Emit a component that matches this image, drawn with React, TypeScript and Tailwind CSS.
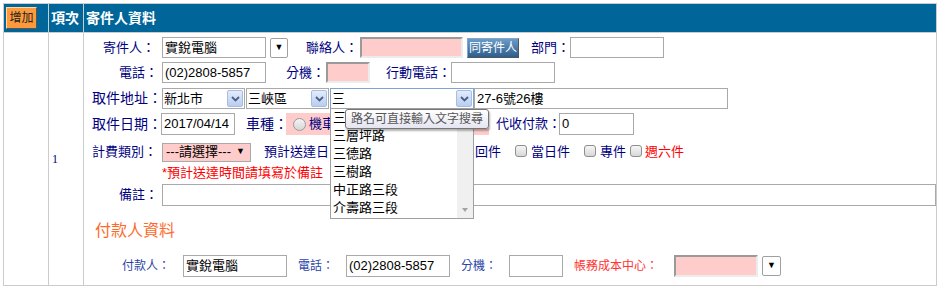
import { FC, ReactNode } from "react";

const navy = "text-[#000080]";

const Chevron: FC = () => (
	<span className="flex h-[17px] w-[16px] items-center justify-center rounded-[2px] border border-[#a7bde6] bg-gradient-to-b from-[#e3ecfa] to-[#b9cdef]">
		<svg width="9" height="6" viewBox="0 0 9 6">
			<path d="M1 1 L4.5 4.5 L8 1" stroke="#4b5f86" strokeWidth="1.8" fill="none" />
		</svg>
	</span>
);

const DownBtn: FC<{ className?: string }> = ({ className = "" }) => (
	<span
		className={`flex h-[20px] w-[18px] items-center justify-center rounded-[2px] border border-[#a0a0a0] bg-white text-[9px] text-black ${className}`}
	>
		▼
	</span>
);

const Box: FC<{ w: string; value?: string; pink?: boolean; h?: string; className?: string }> = ({
	w,
	value = "",
	pink,
	h = "h-[21px]",
	className = "",
}) => (
	<span
		className={`flex items-center whitespace-nowrap px-[2px] text-[13px] text-black ${h} ${w} ${
			pink
				? "border-2 border-t-[#9a9a9a] border-l-[#9a9a9a] border-r-[#ececec] border-b-[#ececec] bg-[#ffcccc]"
				: "border border-[#a9a9a9] bg-white"
		} ${className}`}
	>
		{value}
	</span>
);

const Check: FC = () => (
	<span className="inline-block h-[12px] w-[12px] rounded-[3px] border border-[#8f8f8f] bg-gradient-to-b from-[#f6f6f6] to-[#d8d8d8]" />
);

const Label: FC<{ w: string; children: ReactNode; className?: string }> = ({ w, children, className = "" }) => (
	<span className={`inline-block shrink-0 whitespace-nowrap text-[13px] ${navy} ${w} ${className}`}>{children}</span>
);

const Select: FC<{ w: string; value: string; className?: string; focus?: boolean }> = ({ w, value, className = "", focus }) => (
	<span
		className={`flex h-[21px] items-center justify-between border pl-[1px] pr-[1px] text-[13px] text-black ${
			focus ? "border-[#7ea4d6]" : "border-[#a9a9a9]"
		} bg-white ${w} ${className}`}
	>
		<span>{value}</span>
		<Chevron />
	</span>
);

const roads = ["三", "三層坪路", "三德路", "三樹路", "中正路三段", "介壽路三段"];

const App: FC = () => {
	return (
		<div className="h-[289px] w-[941px] bg-white pl-[3px] pt-[3px] font-['Liberation_Sans','Noto_Sans_CJK_TC',sans-serif]">
			<table className="w-[934px] border-collapse border border-[#cccccc]">
				<thead>
					<tr className="h-[29px] bg-[#006699] text-left text-[14px] font-bold text-white">
						<th className="w-[45px] border border-[#cccccc] pl-[2px]">
							<span className="flex h-[22px] w-[31px] items-center justify-center border border-t-[#ffd9a0] border-l-[#ffd9a0] border-r-[#555] border-b-[#555] bg-[#ff9a3c] text-[12px] font-normal text-[#222]">
								增加
							</span>
						</th>
						<th className="w-[35px] border border-[#cccccc] pl-[2px]">項次</th>
						<th className="border border-[#cccccc] pl-[2px]">寄件人資料</th>
					</tr>
				</thead>
				<tbody>
					<tr className="h-[253px]">
						<td className="border border-[#cccccc]" />
						<td className="border border-[#cccccc] pl-[3px] align-middle font-['Liberation_Serif',serif] text-[12px] text-[#000080]">
							1
						</td>
						<td className="border border-[#cccccc] align-top">
							<div className="flex flex-col pt-[4px]">
								{/* 寄件人 */}
								<div className="flex h-[21px] items-center">
									<Label w="w-[72px]" className="pl-[19px]">寄件人：</Label>
									<Box w="w-[104px]" value="實銳電腦" className="ml-[6px]" />
									<DownBtn className="ml-[4px]" />
									<Label w="w-[54px]" className="ml-[18px]">聯絡人：</Label>
									<Box w="w-[103px]" pink />
									<span className="ml-[4px] flex h-[20px] w-[52px] items-center justify-center whitespace-nowrap border border-[#555] border-t-[#7fa8cc] border-l-[#7fa8cc] bg-gradient-to-b from-[#6b9cc8] to-[#2d5f8e] text-[12px] text-white">
										同寄件人
									</span>
									<Label w="w-[39px]" className="ml-[12px]">部門：</Label>
									<Box w="w-[94px]" />
								</div>
								{/* 電話 */}
								<div className="mt-[4px] flex h-[21px] items-center">
									<Label w="w-[72px]" className="pl-[35px]">電話：</Label>
									<Box w="w-[104px]" value="(02)2808-5857" className="ml-[6px]" />
									<Label w="w-[40px]" className="ml-[20px]">分機：</Label>
									<Box w="w-[44px]" pink />
									<Label w="w-[65px]" className="ml-[16px]">行動電話：</Label>
									<Box w="w-[104px]" />
								</div>
								{/* 取件地址 */}
								<div className="mt-[5px] flex h-[21px] items-center">
									<Label w="w-[72px]" className="pl-[8px] text-[14px] text-[#000066]">取件地址：</Label>
									<Select w="w-[83px]" value="新北市" className="ml-[6px]" />
									<Select w="w-[83px]" value="三峽區" className="ml-[1px]" />
									<div className="relative ml-[1px]">
										<Select w="w-[144px]" value="三" focus />
										<div className="absolute left-0 top-[20px] z-10 flex h-[111px] w-[144px] border border-[#a0a0a0] bg-white">
											<div className="flex flex-1 flex-col">
												{roads.map((r) => (
													<span key={r} className="flex h-[18px] items-center pl-[2px] text-[13px] text-black">
														{r}
													</span>
												))}
											</div>
											<div className="flex w-[16px] flex-col justify-end bg-[#f0f0f0] pb-[5px]">
												<svg width="16" height="6" viewBox="0 0 16 6">
													<path d="M5 1 L11 1 L8 5 Z" fill="#a3a3a3" />
												</svg>
											</div>
										</div>
										<div className="absolute left-[15px] top-[21px] z-20 flex h-[20px] w-[144px] items-center rounded-[3px] border border-[#767676] bg-gradient-to-b from-white to-[#e4e5f0] pl-[5px] text-[12px] text-[#575757] shadow-[1px_2px_2px_rgba(0,0,0,0.3)]">
											路名可直接輸入文字搜尋
										</div>
									</div>
									<Box w="w-[254px]" value="27-6號26樓" />
								</div>
								{/* 取件日期 */}
								<div className="mt-[4px] flex h-[22px] items-center">
									<Label w="w-[72px]" className="pl-[8px] text-[14px] text-[#000066]">取件日期：</Label>
									<Box w="w-[74px]" value="2017/04/14" h="h-[22px]" className="ml-[5px]" />
									<Label w="w-[40px]" className="ml-[11px] text-[14px] text-[#000066]">車種：</Label>
									<span className="flex h-[22px] w-[203px] items-center gap-[3px] bg-[#ffcccc] pl-[7px] text-[13px] text-[#000080]">
										<span className="inline-block h-[13px] w-[13px] rounded-full border border-[#9a9a9a] bg-gradient-to-b from-[#f4f4f4] to-[#d6d6d6]" />
										機車
									</span>
									<Label w="w-[63px]" className="ml-[7px]">代收付款：</Label>
									<Box w="w-[75px]" value="0" h="h-[22px]" />
								</div>
								{/* 計費類別 */}
								<div className="mt-[7px] flex h-[20px] items-center">
									<Label w="w-[72px]" className="pl-[8px] text-[#1a1a66]">計費類別：</Label>
									<span className="ml-[6px] flex h-[19px] w-[89px] items-center justify-between border border-[#a9a9a9] bg-[#ffcccc] pl-[3px] pr-[5px] text-[13px] text-black">
										---請選擇---<span className="text-[9px]">▼</span>
									</span>
									<Label w="w-[211px]" className="ml-[13px]">預計送達日</Label>
									<Label w="w-[26px]">回件</Label>
									<span className="ml-[14px]"><Check /></span>
									<Label w="w-[40px]" className="ml-[4px]">當日件</Label>
									<span className="ml-[13px]"><Check /></span>
									<Label w="w-[26px]" className="ml-[4px]">專件</Label>
									<span className="ml-[4px]"><Check /></span>
									<Label w="w-[40px]" className="ml-[3px] text-[#ff0000]">週六件</Label>
								</div>
								<div className="mt-[3px] flex h-[15px] items-center pl-[78px] text-[13px] text-[#ff0000]">
									*預計送達時間請填寫於備註
								</div>
								{/* 備註 */}
								<div className="mt-[4px] flex h-[22px] items-center">
									<Label w="w-[72px]" className="pl-[35px]">備註：</Label>
									<Box w="w-[774px]" h="h-[22px]" className="ml-[6px]" />
								</div>
								<div className="mt-[16px] flex h-[18px] items-center pl-[11px] text-[16px] text-[#ff6a2a]">
									付款人資料
								</div>
								{/* 付款人 */}
								<div className="mt-[15px] flex h-[22px] items-center text-[12px]">
									<span className="ml-[38px] w-[61px] shrink-0 text-[#2b44a8]">付款人：</span>
									<Box w="w-[104px]" value="實銳電腦" h="h-[22px]" />
									<span className="ml-[11px] w-[48px] shrink-0 text-[#2b44a8]">電話：</span>
									<Box w="w-[104px]" value="(02)2808-5857" h="h-[22px]" className="text-[12.5px]" />
									<span className="ml-[11px] w-[48px] shrink-0 text-[#2b44a8]">分機：</span>
									<Box w="w-[54px]" h="h-[22px]" />
									<span className="ml-[11px] w-[100px] shrink-0 text-[#ff3333]">帳務成本中心：</span>
									<Box w="w-[84px]" pink h="h-[22px]" />
									<DownBtn className="ml-[4px] w-[19px]" />
								</div>
							</div>
						</td>
					</tr>
				</tbody>
			</table>
		</div>
	);
};

export default App;
